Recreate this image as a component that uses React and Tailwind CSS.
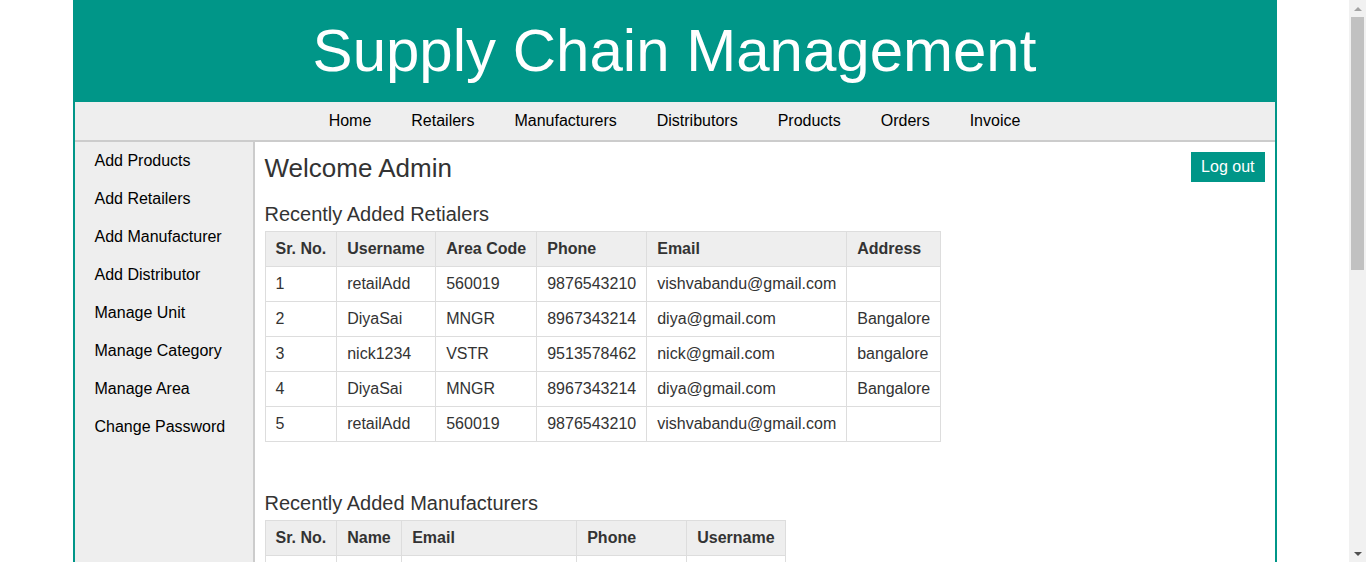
import React from "react";

const navLinks = ["Home", "Retailers", "Manufacturers", "Distributors", "Products", "Orders", "Invoice"];

const sideLinks = [
  "Add Products",
  "Add Retailers",
  "Add Manufacturer",
  "Add Distributor",
  "Manage Unit",
  "Manage Category",
  "Manage Area",
  "Change Password",
];

const retailers = [
  ["1", "retailAdd", "560019", "9876543210", "vishvabandu@gmail.com", ""],
  ["2", "DiyaSai", "MNGR", "8967343214", "diya@gmail.com", "Bangalore"],
  ["3", "nick1234", "VSTR", "9513578462", "nick@gmail.com", "bangalore"],
  ["4", "DiyaSai", "MNGR", "8967343214", "diya@gmail.com", "Bangalore"],
  ["5", "retailAdd", "560019", "9876543210", "vishvabandu@gmail.com", ""],
];

const manufacturers = [
  ["1", "abc", "abc@gmail.com", "9876543210", "abc123"],
  ["2", "xyz", "xyz@gmail.com", "9123456780", "xyz"],
  ["3", "pqr", "pqr@gmail.com", "9988776655", "pqr"],
  ["4", "lmn", "lmn@gmail.com", "9876501234", "lmn"],
  ["5", "def", "def@gmail.com", "9012345678", "def"],
];

function DataTable({ cols, widths, rows }) {
  return (
    <table className="border-collapse text-[16px] text-[#333]">
      <thead>
        <tr className="bg-[#eeeeee]">
          {cols.map((c, i) => (
            <th
              key={c}
              style={{ width: widths[i] }}
              className="border border-[#dddddd] h-[35px] px-[10px] text-left font-bold whitespace-nowrap"
            >
              {c}
            </th>
          ))}
        </tr>
      </thead>
      <tbody>
        {rows.map((r, ri) => (
          <tr key={ri}>
            {r.map((cell, ci) => (
              <td key={ci} className="border border-[#dddddd] h-[35px] px-[10px] whitespace-nowrap">
                {cell}
              </td>
            ))}
          </tr>
        ))}
      </tbody>
    </table>
  );
}

// browser scrollbar as it appears in the screenshot
function Scrollbar() {
  return (
    <div className="w-[17px] shrink-0 h-full bg-[#f1f1f1] flex flex-col items-center">
      <div className="h-[17px] flex items-center justify-center">
        <div className="w-0 h-0 border-x-[4px] border-x-transparent border-b-[4px] border-b-[#a3a3a3]" />
      </div>
      <div className="w-[13px] h-[253px] bg-[#c1c1c1]" />
      <div className="flex-1" />
      <div className="h-[17px] flex items-center justify-center">
        <div className="w-0 h-0 border-x-[4px] border-x-transparent border-t-[4px] border-t-[#505050]" />
      </div>
    </div>
  );
}

export default function App() {
  return (
    <div className="h-screen flex overflow-hidden bg-white font-['Liberation_Sans',Arial,sans-serif]">
      <div className="flex-1 overflow-hidden">
        <div className="mx-auto w-[1204px] border-x-2 border-[#009688]">
          <div className="h-[102px] bg-[#009688] flex items-center justify-center">
            <h1 className="text-white text-[60px] leading-none">Supply Chain Management</h1>
          </div>

          <nav className="h-[40px] bg-[#eeeeee] border-b-2 border-[#cccccc] flex justify-center items-center gap-[40px] text-[16px] text-black">
            {navLinks.map((l) => (
              <a key={l} href="#" className="leading-[18px]">
                {l}
              </a>
            ))}
          </nav>

          <div className="flex">
            <aside className="w-[180px] shrink-0 bg-[#eeeeee] border-r-2 border-[#cccccc] min-h-[1000px]">
              {sideLinks.map((l) => (
                <a key={l} href="#" className="block px-[20px] py-[10px] leading-[18px] text-[16px] text-black">
                  {l}
                </a>
              ))}
            </aside>

            <main className="flex-1 p-[10px] text-[#333]">
              <div className="flex justify-between items-start">
                <h2 className="text-[26px] leading-[30px] mt-[1px]">Welcome Admin</h2>
                <button className="bg-[#009688] text-white text-[16px] h-[30px] px-[10px]">Log out</button>
              </div>

              <h3 className="text-[20px] leading-[22px] mt-[20px] mb-[6px]">Recently Added Retialers</h3>
              <DataTable
                cols={["Sr. No.", "Username", "Area Code", "Phone", "Email", "Address"]}
                widths={[71, 99, 101, 110, 200, 94]}
                rows={retailers}
              />

              <h3 className="text-[20px] leading-[22px] mt-[50px] mb-[6px]">Recently Added Manufacturers</h3>
              <DataTable
                cols={["Sr. No.", "Name", "Email", "Phone", "Username"]}
                widths={[71, 65, 175, 110, 98]}
                rows={manufacturers}
              />
            </main>
          </div>
        </div>
      </div>
      <Scrollbar />
    </div>
  );
}
